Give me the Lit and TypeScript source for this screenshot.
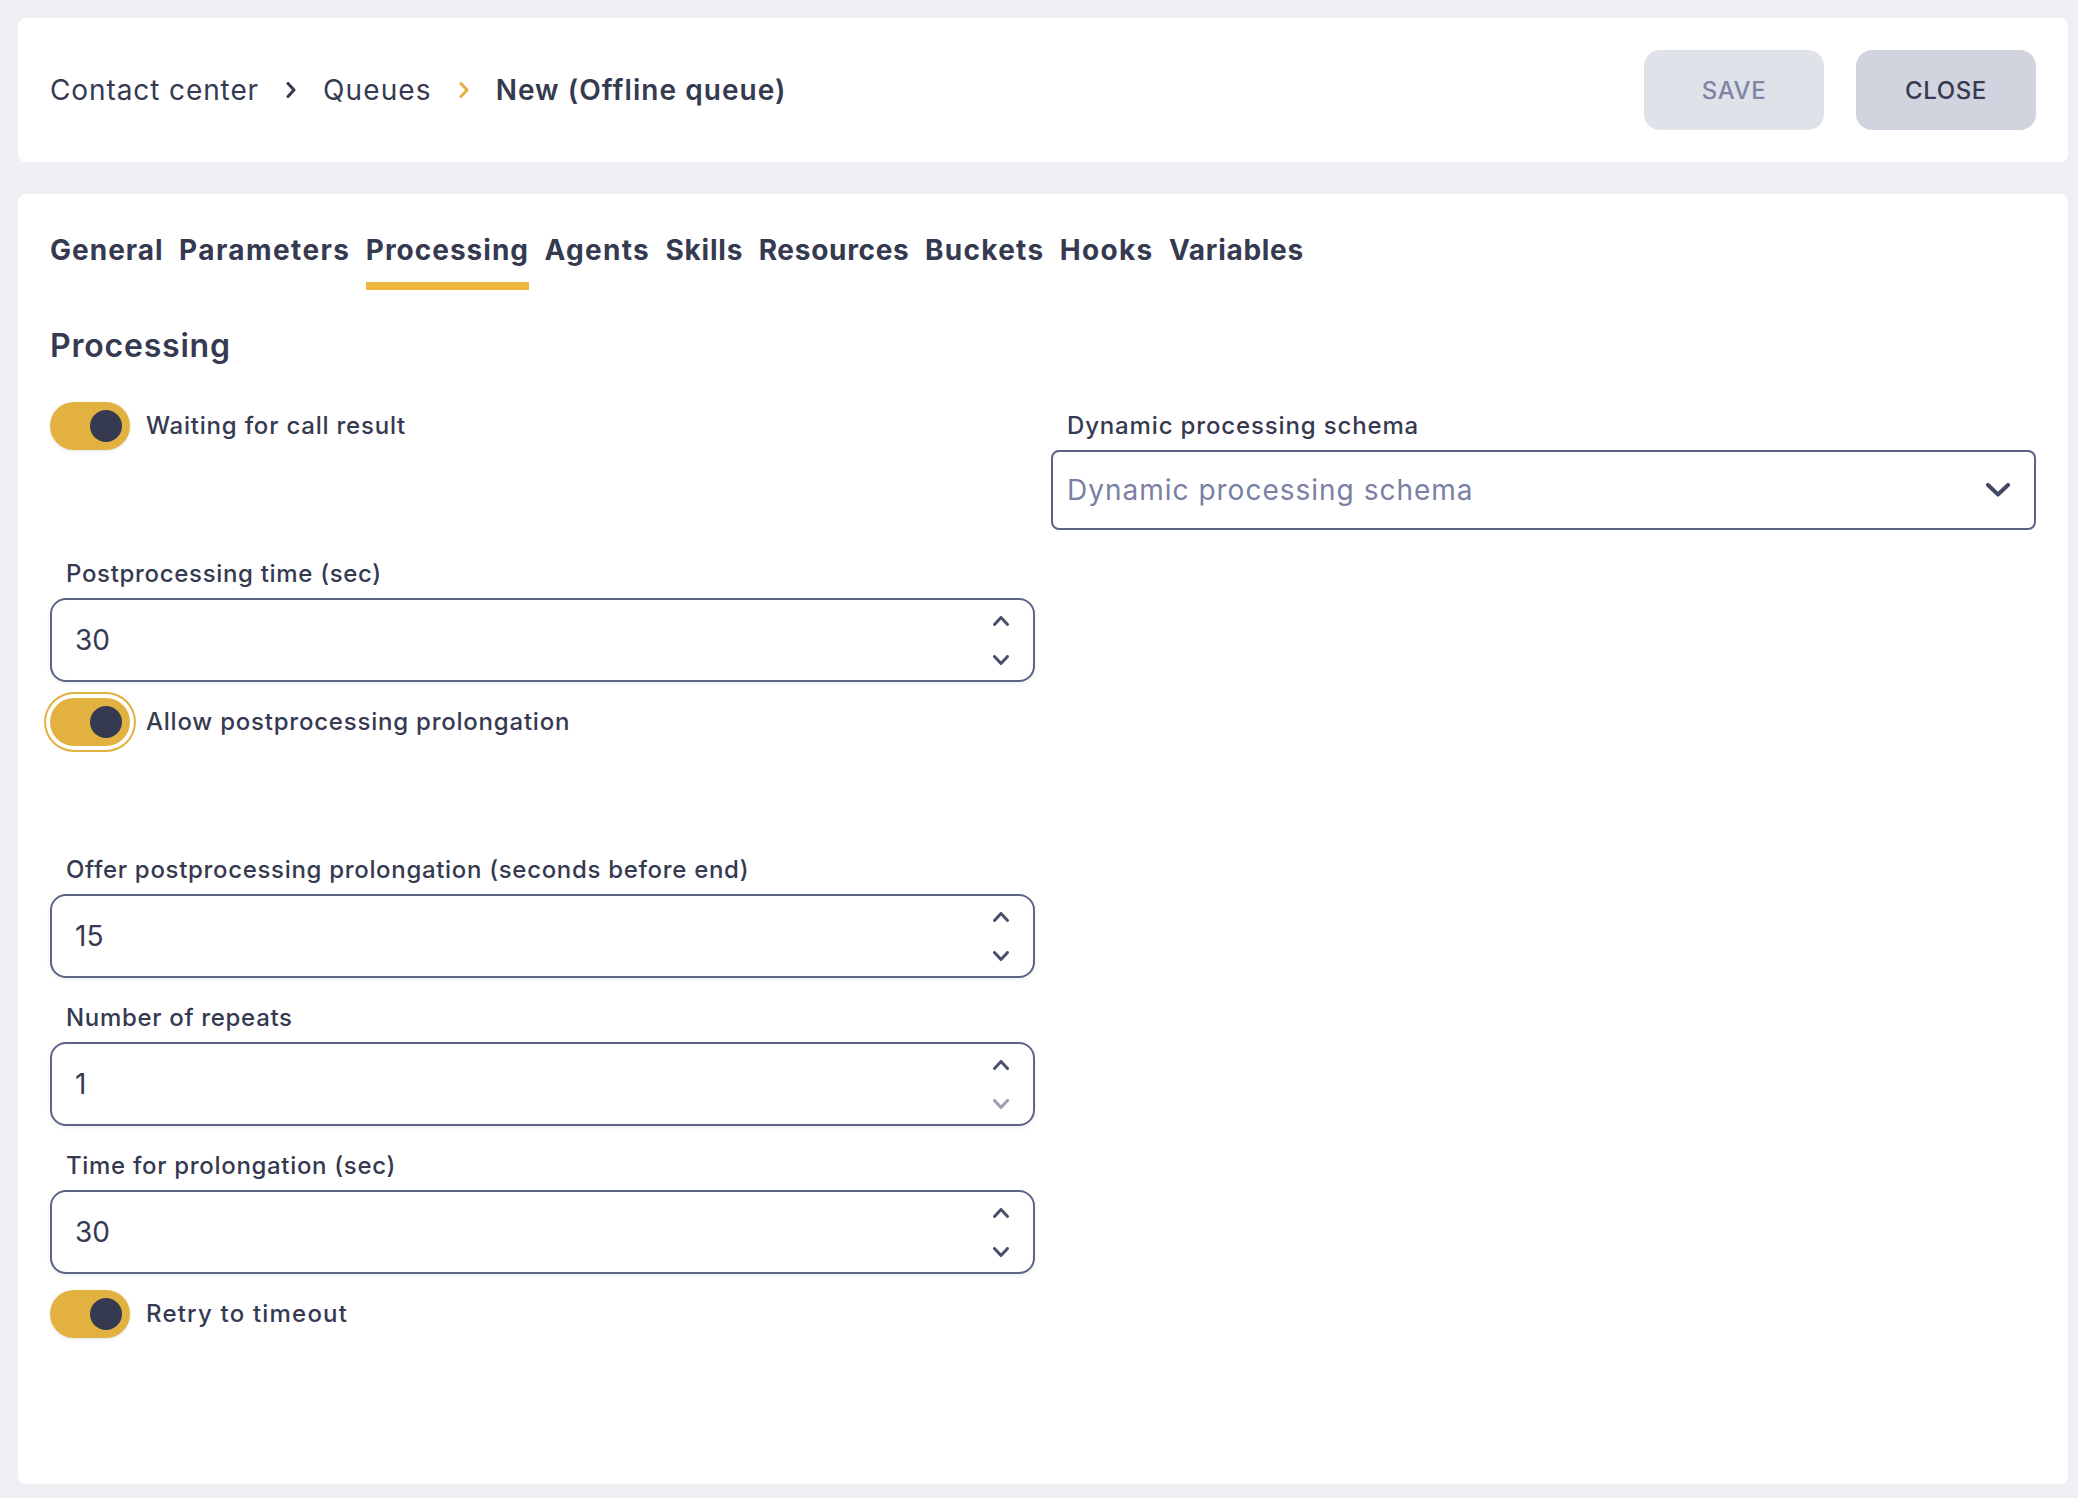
import { LitElement, html, css, svg } from "lit";
import { customElement } from "lit/decorators.js";

const chev = (d: string, w: number, h: number, vb: string, sw: number) => html`<svg width=${w} height=${h} viewBox=${vb} fill="none" stroke="currentColor" stroke-width=${sw} stroke-linecap="round" stroke-linejoin="round">${svg`<path d=${d}></path>`}</svg>`;

@customElement("app-root")
export class AppRoot extends LitElement {
  static styles = css`
    :host { display: flex; flex-direction: column; gap: 32px; box-sizing: border-box; width: 2078px; height: 1498px; padding: 18px 10px 14px 18px; background: #eff0f4; font-family: Inter, "Open Sans", sans-serif; color: #353a51; }
    .card { background: #fff; border-radius: 8px; padding: 32px; box-sizing: border-box; }
    .header { display: flex; align-items: center; justify-content: space-between; height: 144px; }
    .crumbs { display: flex; align-items: center; font-size: 28px; }
    .crumb { letter-spacing: 0.9px; }
    .crumb.q { letter-spacing: 1.1px; }
    .sep { display: flex; width: 64px; justify-content: center; color: #353a51; }
    .sep.gold { color: #e2b13f; }
    .current { font-weight: 600; letter-spacing: 1.05px; }
    .actions { display: flex; gap: 32px; }
    .btn { width: 180px; height: 80px; border-radius: 16px; display: flex; align-items: center; justify-content: center; font-size: 24px; font-weight: 500; letter-spacing: 0.6px; }
    .save { background: #e0e2e9; color: #7e85a5; }
    .close { background: #d1d4df; color: #353a51; }
    .main { flex: 1; }
    .tabs { display: flex; gap: 15.4px; }
    .tab { font-size: 28px; font-weight: 700; line-height: 48px; letter-spacing: 1px; padding-bottom: 8px; border-bottom: 8px solid transparent; }
    .tab:nth-child(2) { letter-spacing: 1.4px; }
    .tab:nth-child(4) { letter-spacing: 1.3px; }
    .tab:nth-child(5) { letter-spacing: 0.8px; }
    .tab:nth-child(6) { letter-spacing: 0.7px; }
    .tab:nth-child(7) { letter-spacing: 1.3px; }
    .tab:nth-child(8) { letter-spacing: 1.3px; }
    .tab:nth-child(9) { letter-spacing: 0.7px; }
    .tab.active { border-bottom-color: #f0b73f; }
    h2 { margin: 36px 0 36px; font-size: 32px; line-height: 40px; font-weight: 600; letter-spacing: 0.8px; }
    .grid { display: grid; grid-template-columns: 985px 985px; column-gap: 16px; row-gap: 16px; grid-auto-rows: 132px; }
    .switch { display: flex; align-items: flex-start; gap: 16px; font-size: 24px; font-weight: 500; line-height: 48px; letter-spacing: 0.78px; }
    .switch.wide { letter-spacing: 1.2px; }
    .track { width: 80px; height: 48px; flex: none; border-radius: 24px; background: #e2b13f; box-sizing: border-box; padding: 8px; display: flex; justify-content: flex-end; box-shadow: 0 1px 3px rgba(53, 58, 81, 0.15); }
    .track.focus { box-shadow: 0 0 0 4px #fff, 0 0 0 6px #e2b13f; }
    .knob { width: 32px; height: 32px; border-radius: 50%; background: #353a51; }
    .label { padding: 8px 16px 0; height: 48px; box-sizing: border-box; line-height: 32px; font-size: 24px; font-weight: 500; letter-spacing: 0.68px; }
    .label.wide { letter-spacing: 0.85px; }
    .select, .number { display: flex; align-items: center; justify-content: space-between; box-sizing: border-box; border: 2px solid #5b6487; background: #fff; }
    .select { height: 80px; border-radius: 8px; padding: 0 24px 0 14px; font-size: 28px; letter-spacing: 1px; color: #7a80a5; }
    .select svg { color: #434965; }
    .number { height: 84px; border-radius: 16px; padding: 0 24px 0 23px; font-size: 28px; box-shadow: 0 2px 4px rgba(53, 58, 81, 0.08); }
    .spin { display: flex; flex-direction: column; gap: 29px; color: #4a4f6b; }
    .spin svg { display: block; }
    .muted { opacity: 0.55; }
  `;

  private sw(label: string, focus = false, wide = false) {
    return html`<div class="switch ${wide ? "wide" : ""}"><div class="track ${focus ? "focus" : ""}"><div class="knob"></div></div><span>${label}</span></div>`;
  }

  private num(label: string, value: string, downOff = false) {
    return html`<div>
      <div class="label">${label}</div>
      <div class="number"><span>${value}</span>
        <div class="spin">
          ${chev("M1.5 8.5 8 1.5l6.5 7", 16, 10, "0 0 16 10", 3)}
          <span class=${downOff ? "muted" : ""}>${chev("M1.5 1.5 8 8.5l6.5-7", 16, 10, "0 0 16 10", 3)}</span>
        </div>
      </div>
    </div>`;
  }

  render() {
    const tabs = ["General", "Parameters", "Processing", "Agents", "Skills", "Resources", "Buckets", "Hooks", "Variables"];
    const sepIcon = chev("M2 1.5 8 8l-6 6.5", 10, 16, "0 0 10 16", 3);
    return html`
      <div class="card header">
        <div class="crumbs">
          <span class="crumb">Contact center</span>
          <span class="sep">${sepIcon}</span>
          <span class="crumb q">Queues</span>
          <span class="sep gold">${sepIcon}</span>
          <span class="current">New (Offline queue)</span>
        </div>
        <div class="actions">
          <div class="btn save">SAVE</div>
          <div class="btn close">CLOSE</div>
        </div>
      </div>
      <div class="card main">
        <div class="tabs">${tabs.map((t) => html`<div class="tab ${t === "Processing" ? "active" : ""}">${t}</div>`)}</div>
        <h2>Processing</h2>
        <div class="grid">
          ${this.sw("Waiting for call result")}
          <div>
            <div class="label wide">Dynamic processing schema</div>
            <div class="select"><span>Dynamic processing schema</span>${chev("M2 2l10 9.5L22 2", 24, 14, "0 0 24 14", 4)}</div>
          </div>
          ${this.num("Postprocessing time (sec)", "30")}
          <div></div>
          ${this.sw("Allow postprocessing prolongation", true)}
          <div></div>
          ${this.num("Offer postprocessing prolongation (seconds before end)", "15")}
          <div></div>
          ${this.num("Number of repeats", "1", true)}
          <div></div>
          ${this.num("Time for prolongation (sec)", "30")}
          <div></div>
          ${this.sw("Retry to timeout", false, true)}
        </div>
      </div>
    `;
  }
}
